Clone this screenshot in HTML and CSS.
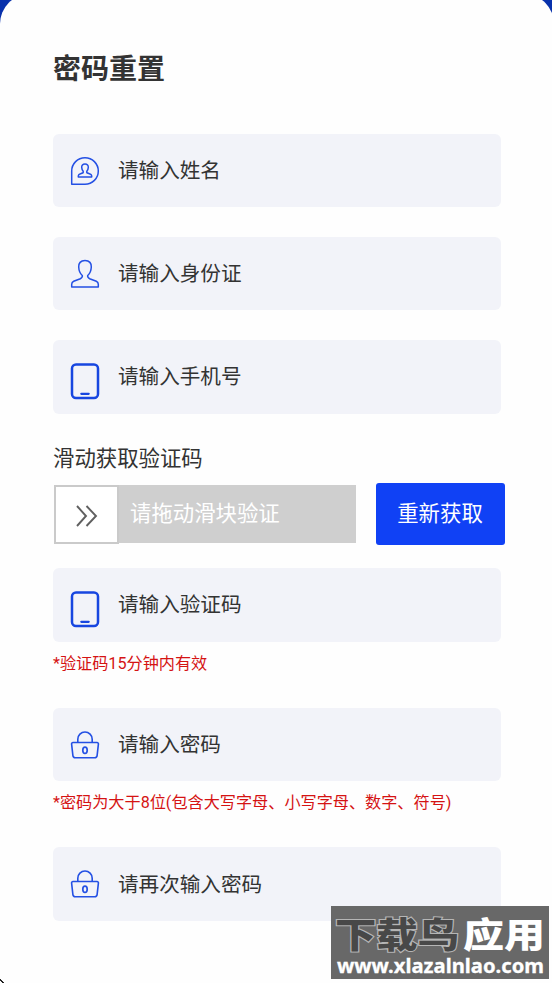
FILE: index.html
```
<!DOCTYPE html>
<html lang="zh-CN">
<head>
<meta charset="utf-8">
<title>密码重置</title>
<link rel="stylesheet" href="styles.css">
</head>
<body>
<svg class="defs" width="0" height="0" aria-hidden="true">
  <symbol id="phone" viewBox="0 0 30 38"><rect x="2" y="2.500" width="26" height="33.500" rx="4" stroke-width="2.500"/><path d="M11.300 31.800h7.400" stroke-width="2.200" stroke-linecap="round"/></symbol>
  <symbol id="lock" viewBox="0 0 30 30"><path d="M7.800 12.500V9.200a7.200 7.200 0 0 1 14.400 0v3.300M3 12.500h24a1.400 1.400 0 0 1 1.400 1.600l-1.300 11.600a2.400 2.400 0 0 1-2.400 2.100H5.300a2.400 2.400 0 0 1-2.400-2.100L1.600 14.100A1.400 1.400 0 0 1 3 12.500z" stroke-width="1.600"/><ellipse cx="15" cy="20.300" rx="2.200" ry="3.200" stroke-width="1.700"/></symbol>
</svg>
<main class="card">
  <h1 class="title">密码重置</h1>
  <div class="field name">
    <svg class="icon" viewBox="0 0 30 30"><path d="M1.700 28.300V15A13.300 13.300 0 1 1 15 28.300z" stroke-width="1.500"/><path d="M15 8c-2.300 0-3.400 1.400-3.300 3.400.1 1.800.6 2.900 1.500 3.800v1.400c-1 1-4.900 1.300-4.900 3.100v1.400h13.400v-1.400c0-1.800-3.900-2.100-4.900-3.100v-1.400c.9-.9 1.400-2 1.500-3.800.1-2-1-3.400-3.300-3.400z" stroke-width="1.500"/></svg>
    <span>请输入姓名</span>
  </div>
  <div class="field">
    <svg class="icon" viewBox="0 0 30 30"><path d="M15 1.600c-4.500 0-6.500 2.600-6.300 6.400.2 4 1.500 6.700 3.600 8.500.3 1.500-.4 2.500-2 3.200l-6.600 2.600c-1.400.6-2 1.500-2 2.900v2.900h26.600v-2.900c0-1.400-.6-2.300-2-2.900l-6.600-2.600c-1.600-.7-2.300-1.700-2-3.200 2.100-1.800 3.400-4.500 3.600-8.500.2-3.800-1.800-6.400-6.300-6.400z" stroke-width="1.500"/></svg>
    <span>请输入身份证</span>
  </div>
  <div class="field">
    <svg class="icon phone"><use href="#phone"/></svg>
    <span>请输入手机号</span>
  </div>
  <p class="label">滑动获取验证码</p>
  <div class="verify">
    <div class="slider">
      <div class="handle"><svg viewBox="0 0 24 24"><path d="M2 2l9 10-9 10M11.500 2l9.500 10-9.500 10"/></svg></div>
      <span class="prompt">请拖动滑块验证</span>
    </div>
    <button class="resend">重新获取</button>
  </div>
  <div class="field code">
    <svg class="icon phone"><use href="#phone"/></svg>
    <span>请输入验证码</span>
  </div>
  <p class="hint">*验证码15分钟内有效</p>
  <div class="field secret">
    <svg class="icon"><use href="#lock"/></svg>
    <span>请输入密码</span>
  </div>
  <p class="hint">*密码为大于8位(包含大写字母、小写字母、数字、符号)</p>
  <div class="field secret">
    <svg class="icon"><use href="#lock"/></svg>
    <span>请再次输入密码</span>
  </div>
</main>
<div class="watermark">
  <svg viewBox="0 0 218 73">
    <g class="mark-name"><text class="dark" x="4" y="42" textLength="124" lengthAdjust="spacingAndGlyphs">下载鸟</text><text class="light" x="132" y="42" textLength="82" lengthAdjust="spacingAndGlyphs">应用</text></g>
    <text class="site" x="6" y="67" textLength="207" lengthAdjust="spacingAndGlyphs">www.xlazalnlao.com</text>
  </svg>
</div>
<svg class="corner" viewBox="0 0 4 4"><path d="M0 0h1v1h1v1h1v1h1v1H2V3H1V2H0z"/></svg>
</body>
</html>
```
FILE: styles.css
```
* { box-sizing: border-box; }
body {
  margin: 0;
  height: 983px;
  overflow: hidden;
  position: relative;
  background: #0831ac;
  color: #333;
  font-family: Roboto, "Noto Sans CJK SC", sans-serif;
}
.defs { position: absolute; }
.card {
  width: 554px;
  height: 1030px;
  margin-top: -6px;
  padding: 52px 53px 0;
  border-radius: 30px;
  background: #fefefe;
}
.title {
  margin: 0 0 40px;
  font-size: 28px;
  line-height: 48px;
  font-weight: 700;
}
.field {
  width: 448px;
  height: 73.400px;
  margin-bottom: 29.700px;
  padding-left: 17px;
  display: flex;
  align-items: center;
  border-radius: 6px;
  background: #f2f3f9;
  font-size: 20.600px;
  line-height: 30px;
}
.field span { margin: 1px 0 0 18px; }
.icon {
  width: 30px;
  height: 30px;
  fill: none;
  stroke: #2450e4;
  stroke-linejoin: round;
}
.icon.phone { height: 38px; margin-top: 9px; stroke: #1746e0; }
.label {
  margin: 0;
  padding-top: 1px;
  font-size: 21.400px;
  line-height: 30px;
}
.verify {
  display: flex;
  align-items: center;
  margin: 9px 0 23px;
  height: 62px;
}
.slider {
  flex: none;
  display: flex;
  align-items: center;
  width: 302px;
  height: 58px;
  margin-left: 1px;
  background: #cfcfcf;
}
.handle {
  flex: none;
  width: 65px;
  height: 59px;
  border: 2px solid #cacaca;
  background: #fff;
  display: flex;
  align-items: center;
  justify-content: center;
}
.handle svg { width: 24px; height: 24px; margin-top: 3px; fill: none; stroke: #606060; stroke-width: 1.900; }
.prompt { margin: -1px 0 0 11px; color: #fff; font-size: 21.400px; line-height: 30px; }
.resend {
  flex: none;
  width: 129px;
  height: 62px;
  margin-left: 19.500px;
  padding: 0 0 1px;
  border: 0;
  border-radius: 3px;
  background: #1041f5;
  color: #fff;
  font: 21.400px/30px Roboto, "Noto Sans CJK SC", sans-serif;
}
.code, .secret { margin-bottom: 0; }
.hint {
  margin: 10px 0 32.200px;
  color: #d51313;
  font-size: 16.150px;
  line-height: 24px;
  white-space: nowrap;
}
.watermark {
  position: absolute;
  left: 331px;
  top: 906px;
  width: 218px;
  height: 73px;
  background: #686868;
}
.watermark svg { display: block; width: 218px; height: 73px; }
.mark-name { font: 900 35px "Noto Sans CJK SC", sans-serif; }
.dark { fill: #484848; stroke: #b5b5b5; stroke-width: 2.200px; paint-order: stroke; }
.light { fill: #fff; }
.site { fill: #fff; stroke: #fff; stroke-width: 0.300px; font: 700 20px "Noto Sans", sans-serif; }
.corner { position: absolute; left: 0; top: 979px; width: 4px; height: 4px; fill: #222; }
```
